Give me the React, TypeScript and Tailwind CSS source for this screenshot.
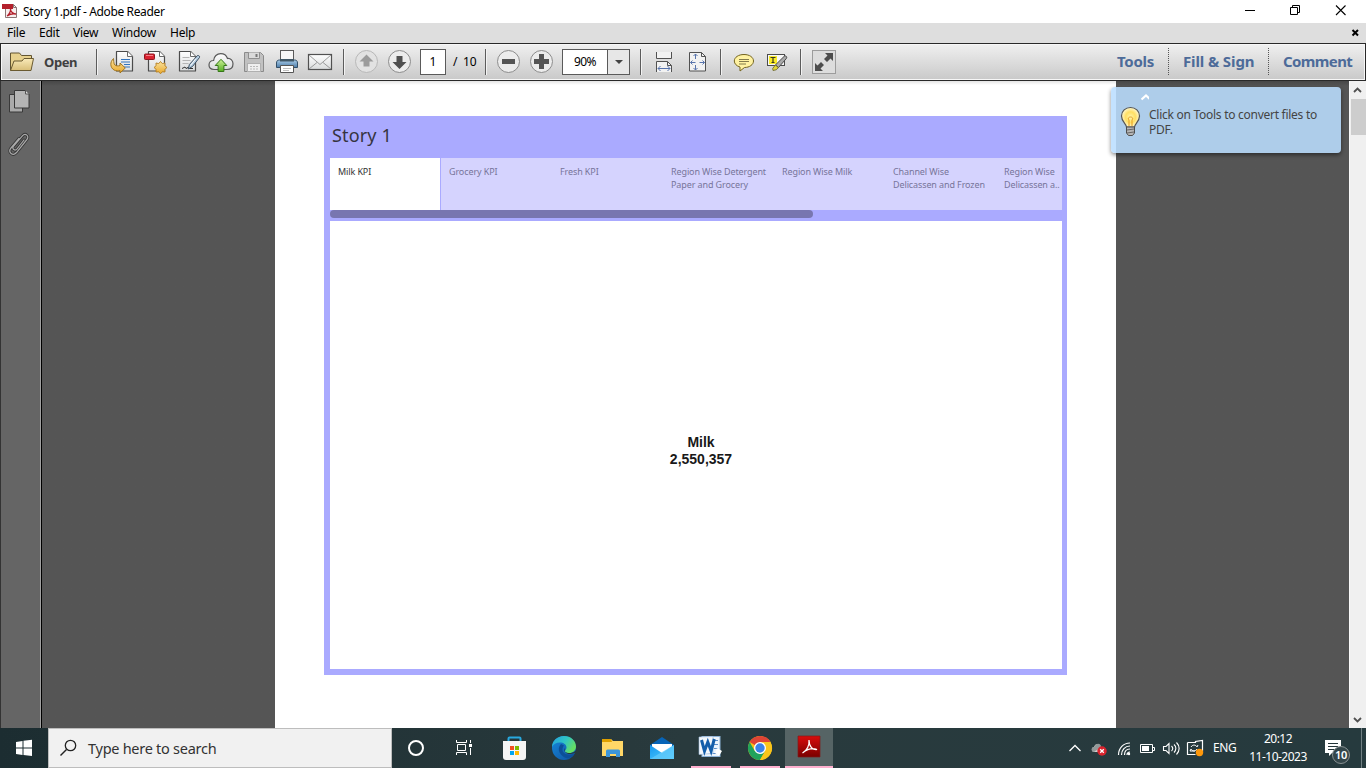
import React from "react";

type ArtProps = { x: number; y: number; w: number; h: number; children: React.ReactNode };

/* Drawing whose inner coordinates are screen pixels */
function Art({ x, y, w, h, children }: ArtProps) {
  return (
    <svg className="block shrink-0" width={w} height={h} viewBox={`${x} ${y} ${w} ${h}`} fill="none">
      {children}
    </svg>
  );
}

function TitleBar() {
  return (
    <header className="flex h-[23px] shrink-0 items-center bg-white">
      <Art x={0} y={0} w={23} h={23}>
        <path d="M5.5 4.5h8l3 3v10h-11z" fill="#f6eeee" stroke="#8b7575" />
        <path d="M13.5 4.5v3h3" stroke="#8b7575" />
        <rect x="2" y="4" width="11" height="5" fill="#b3202c" />
        <path d="M7 16c2-1 4-5 3.5-7 0 3 3 5 5.500 5-3-.7-6 0-9 2z" stroke="#b3202c" strokeWidth="1.300" />
      </Art>
      <span className="flex-1 pt-px whitespace-nowrap text-[12px] tracking-[-0.370px] text-black">Story 1.pdf - Adobe Reader</span>
      <Art x={1226} y={0} w={140} h={23}>
        <path d="M1245 10.500h10" stroke="#000" />
        <path d="M1290.500 7.500h7v7h-7zM1292.500 7V5.500h7v7h-1.500" stroke="#000" />
        <path d="M1336 5.500l9.500 9.500M1345.500 5.500l-9.500 9.500" stroke="#000" strokeWidth="1.100" />
      </Art>
    </header>
  );
}

function MenuBar() {
  return (
    <nav className="flex h-[20px] shrink-0 items-center bg-[#dedede] pl-[7px] text-[12px] tracking-[-0.250px] text-black">
      <span className="w-[32px]">File</span>
      <span className="w-[34px]">Edit</span>
      <span className="w-[39px]">View</span>
      <span className="w-[58px]">Window</span>
      <span className="flex-1">Help</span>
      <Art x={1346} y={23} w={20} h={20}>
        <path d="M1352.500 30l5.500 5.500M1358 30l-5.500 5.500" stroke="#000" strokeWidth="2" />
      </Art>
    </nav>
  );
}

function Separator() {
  return <div className="h-[26px] w-[2px] shrink-0 border-l border-[#5c5c5c] bg-[#f3f3f3]" />;
}

function Page({ x }: { x: number }) {
  return (
    <>
      <path d={`M${x} 51.500h11l5 5v14.500h-16z`} fill="url(#paper)" stroke="#4b4b4b" strokeWidth="1.200" strokeLinejoin="round" />
      <path d={`M${x + 11} 51.500v5h5`} fill="#fff" stroke="#6a6a6a" />
    </>
  );
}

function ToolbarIconsLeft() {
  return (
    <Art x={98} y={46} w={245} h={32}>
      <defs>
        <linearGradient id="paper" x1="0" y1="0" x2="0" y2="1">
          <stop stopColor="#fff" /><stop offset="1" stopColor="#d9dbdc" />
        </linearGradient>
        <linearGradient id="gold" x1="0" y1="0" x2="0" y2="1">
          <stop stopColor="#fae3a0" /><stop offset="1" stopColor="#e9a728" />
        </linearGradient>
        <linearGradient id="leaf" x1="0" y1="0" x2="0" y2="1">
          <stop stopColor="#d0f39a" /><stop offset="1" stopColor="#55ae22" />
        </linearGradient>
        <linearGradient id="printer" x1="0" y1="0" x2="0" y2="1">
          <stop stopColor="#a9cdea" /><stop offset="1" stopColor="#4d7ca8" />
        </linearGradient>
      </defs>
      <Page x={116.5} />
      <path d="M121 59.500h9M121 62h9M124 64.500h6M124 67h6" stroke="#3475be" strokeWidth="1.200" />
      <path d="M113.500 58.500c-3.800 3.500-3.500 9 .500 11.500 2 1.100 4.500 1 6 .600v2.400l5.300-5-5.300-5v2.600c-2.500.800-5 .200-5.800-1.600-.600-1.400-.400-3.500-.700-5.500z" fill="url(#gold)" stroke="#9a6d17" strokeWidth=".900" />

      <Page x={148.5} />
      <rect x="144.500" y="54" width="10" height="5.500" rx=".8" fill="#db2230" stroke="#8e1720" />
      <path d="M146 55.500h7" stroke="#f68088" />
      <path d="M160.500 61.500l1.800 2.100 2.700-.6-.1 2.700 2.100 1.800-2.100 1.800.1 2.700-2.700-.2-1.800 2-1.800-2-2.700.2.100-2.700-2.100-1.800 2.100-1.800-.1-2.700 2.700.6z" fill="url(#gold)" stroke="#b47e21" strokeWidth=".9" />

      <Page x={179.500} />
      <path d="M182.500 57.500h7M182.500 60.500h8M182.500 63.500h6" stroke="#b5b5b5" />
      <path d="M182 68.500l3-1.500 1 1.500 2-1 1 1h4" stroke="#333" />
      <path d="M197.500 55.500c1.500-.3 2.500 1 2 2l-7 9-4.300 2.500 1.200-4.500z" fill="#b4cce0" stroke="#3e5061" />
      <path d="M196 58.500l-5.500 7" stroke="#fff" />

      <path d="M214 69.500c-3 0-5-1.700-5-4.400s2-4.600 4.600-4.600c.3-4 3.400-6.900 7.100-6.900 3.200 0 5.800 1.900 6.800 4.900 3.300-.3 5.500 2.300 5.500 5.200 0 3.300-2.200 5.800-6 5.800z" fill="url(#paper)" stroke="#595959" strokeWidth="1.200" />
      <path d="M221 59.300l5.800 6.200h-2.900v6h-5.800v-6h-2.900z" fill="url(#leaf)" stroke="#357718" />

      <path d="M244.500 52.500h16l3 3v16h-19z" fill="#c1c1c1" stroke="#8b8b8b" />
      <path d="M248.500 52.500v6h11v-6" fill="#dadada" stroke="#8f8f8f" />
      <path d="M256.500 54v3" stroke="#777" strokeWidth="2" />
      <rect x="247.500" y="63.500" width="13" height="8" fill="#efefef" stroke="#b0b0b0" />
      <path d="M250 66.500h8M250 69h8" stroke="#b9b9b9" strokeDasharray="2 1" />

      <rect x="280.500" y="50.500" width="13" height="10" fill="#f7f7f7" stroke="#5a5a5a" />
      <path d="M276.500 63c0-2 1-3 3-3h15c2 0 3 1 3 3v4.500h-21z" fill="url(#printer)" stroke="#334f68" />
      <rect x="280" y="59" width="14" height="2.500" fill="#405766" />
      <path d="M280.500 65.500h13v7h-13z" fill="#fff" stroke="#555" />
      <path d="M283 68.500h8M283 70.500h6" stroke="#c0c0c0" />

      <rect x="308.500" y="54.500" width="23" height="15" fill="url(#paper)" stroke="#515151" strokeWidth="1.200" />
      <path d="M309 55l11 9.500 11-9.500M309 69l8-6.500M331 69l-8-6.500" stroke="#868686" strokeWidth=".8" />
    </Art>
  );
}

function RoundButton({ x, children, dim }: { x: number; children: React.ReactNode; dim?: boolean }) {
  return (
    <>
      <circle cx={x} cy="61.500" r="11" fill={dim ? "#e2e2e2" : "#ececec"} stroke={dim ? "#b8b8b8" : "#8c8c8c"} />
      {children}
    </>
  );
}

function Toolbar() {
  return (
    <div className="flex h-[38px] shrink-0 items-center border border-[#292929] bg-linear-to-b from-[#f0f0f0] to-[#c9c9c9] shadow-[inset_0_0_0_1px_#f7f7f7]">
      <Art x={1} y={46} w={43} h={32}>
        <defs>
          <linearGradient id="folder" x1="0" y1="0" x2="0" y2="1">
            <stop stopColor="#f9eab9" /><stop offset="1" stopColor="#d8be78" />
          </linearGradient>
        </defs>
        <path d="M10.500 70.500v-17.500h9l2 2.500h10v4" fill="#e7d18e" stroke="#625531" />
        <path d="M10.500 70.500l3.500-9.500h8l2-2.500h9.500l-2.500 12z" fill="url(#folder)" stroke="#6a5a31" strokeLinejoin="round" />
      </Art>
      <span className="w-[52px] shrink-0 text-[13px] font-bold tracking-[-0.400px] text-[#404040]">Open</span>
      <Separator />
      <ToolbarIconsLeft />
      <div className="flex shrink-0 items-center">
        <Separator />
        <Art x={345} y={46} w={75} h={32}>
          <RoundButton x={366.500} dim>
            <path d="M366.500 54.500l7 7h-4v5h-6v-5h-4z" fill="#9b9b9b" />
          </RoundButton>
          <RoundButton x={399.500}>
            <path d="M399.500 69l-7-7h4v-6h6v6h4z" fill="#505050" />
          </RoundButton>
        </Art>
        <div className="flex h-[26px] w-[26px] items-center justify-center border border-[#5a5a5a] bg-white text-[12px] text-black">1</div>
        <span className="w-[39px] pl-[7px] text-[12px] tracking-[-0.200px] whitespace-pre text-black">/  10</span>
        <Separator />
        <Art x={487} y={46} w={75} h={32}>
          <RoundButton x={508.500}><rect x="502" y="59" width="13" height="5" fill="#555" /></RoundButton>
          <RoundButton x={541.500}><path d="M534 59h5v-5h5v5h5v5h-5v5h-5v-5h-5z" fill="#555" /></RoundButton>
        </Art>
        <div className="flex h-[26px] w-[68px] border border-[#5a5a5a] bg-white">
          <span className="flex w-[44px] items-center justify-center text-[12px] tracking-[-0.500px] text-black">90%</span>
          <span className="flex flex-1 items-center justify-center border-l border-[#5a5a5a] bg-[#e7e7e7]">
            <Art x={0} y={0} w={8} h={4}><path d="M0 0h8L4 4z" fill="#444" /></Art>
          </span>
        </div>
        <div className="w-[10px]" />
        <Separator />
        <Art x={642} y={46} w={78} h={32}>
          <path d="M656.500 52v6.500h15V52" fill="#f2f2f2" stroke="#515151" />
          <path d="M656.500 72V61.500h11l4 4V72" fill="#f2f2f2" stroke="#515151" />
          <path d="M667.500 61.500v4h4" stroke="#515151" />
          <path d="M658 68.500h12M660.500 66l-2.500 2.500 2.500 2.500M667.500 66l2.500 2.500-2.500 2.500" stroke="#5874ac" />
          <path d="M689.500 52.500h12l4 4v14.500h-16z" fill="#f2f2f2" stroke="#515151" />
          <path d="M701.500 52.500v4h4" stroke="#515151" />
          <path d="M695.500 54v5M695.500 65v5M690.500 62.500h5M699.500 62.500h5M693.500 56l2-2 2 2M693.500 68l2 2 2-2M692.500 60.500l-2 2 2 2M702.500 60.500l2 2-2 2" stroke="#5874ac" />
        </Art>
        <Separator />
        <Art x={722} y={46} w={78} h={32}>
          <path d="M744 54.500c5.500 0 9.500 2.800 9.500 6.500s-4 6.500-9 6.500l-4.500 3.500v-4c-3.500-1-5.700-3.300-5.700-6 0-3.700 4.200-6.500 9.700-6.500z" fill="#fff2a2" stroke="#74641f" />
          <path d="M739 59.500h10M739 61.500h10M739 64h7" stroke="#756d42" strokeWidth=".9" />
          <rect x="767.500" y="54.500" width="17" height="11" fill="#f8f8f8" stroke="#4c4c4c" />
          <rect x="769" y="56" width="8" height="8" fill="#f9ec29" />
          <path d="M770.500 57.500h5M773 57.500v5.500M771.500 62.500h3" stroke="#393621" strokeWidth="1.200" />
          <path d="M784.500 56c1.700-.4 2.700.9 2 2.300l-8 9.200-3-2.600z" fill="#aaa" stroke="#4b4b4b" />
          <path d="M775.300 65l3 2.600-2 2.200-3.300.7-.3-2z" fill="#e1d73a" stroke="#666126" strokeWidth=".8" />
        </Art>
        <Separator />
        <Art x={802} y={46} w={40} h={32}>
          <rect x="812.500" y="50.500" width="23" height="23" fill="#ddd" stroke="#9c9c9c" />
          <path d="M825 53h8v8l-2.500-2.500-3.500 3.500-3-3 3.500-3.500zM823 71h-8v-8l2.500 2.500 3.500-3.500 3 3-3.500 3.500z" fill="#4d4d4d" />
        </Art>
      </div>
      <div className="flex flex-1 justify-end pb-px text-[15px] font-bold text-[#4d6b99]">
        <span className="flex h-[27px] w-[51px] items-center tracking-[-0.250px]">Tools</span>
        <span className="flex h-[27px] w-[100px] items-center border-l border-dotted border-[#555] pl-[14px] tracking-[-0.120px]">Fill &amp; Sign</span>
        <span className="flex h-[27px] w-[97px] items-center border-l border-dotted border-[#555] pl-[14px] tracking-[-0.600px]">Comment</span>
      </div>
    </div>
  );
}

const tabs: string[][] = [
  ["Milk KPI"],
  ["Grocery KPI"],
  ["Fresh KPI"],
  ["Region Wise Detergent", "Paper and Grocery"],
  ["Region Wise Milk"],
  ["Channel Wise", "Delicassen and Frozen"],
  ["Region Wise", "Delicassen a.."],
];

function Story() {
  return (
    <section className="flex h-[559px] w-[743px] flex-col bg-[#aaaaff] pr-[5px] pl-[6px]">
      <h1 className="h-[42px] pl-[2px] text-[18px] leading-[39px] tracking-[0.150px] text-[#36343f]">Story 1</h1>
      <div className="flex h-[52px] overflow-hidden bg-[#d5d3fe]">
        {tabs.map((lines, i) => (
          <div
            key={lines.join()}
            className={
              i === 0
                ? "w-[111px] shrink-0 border-r border-[#aaaaff] bg-white pt-[7px] pl-[8px] text-[9px] leading-[13px] tracking-[-0.110px] text-[#333]"
                : "w-[111px] shrink-0 pt-[7px] pl-[8px] text-[9px] leading-[13px] tracking-[-0.110px] text-[#77759a]"
            }
          >
            {lines.map((line) => <div key={line} className="whitespace-nowrap">{line}</div>)}
          </div>
        ))}
      </div>
      <div className="mb-[3px] h-[8px] w-[483px] rounded-full bg-[#7876b0]" />
      <div className="flex h-[448px] flex-col items-center bg-white pt-[213px] pl-[10px] font-['Liberation_Sans',Arial,sans-serif] text-[14px] leading-[17px] font-bold text-[#191919]">
        <div>Milk</div>
        <div>2,550,357</div>
      </div>
    </section>
  );
}

function Tip() {
  return (
    <aside className="absolute top-[6px] left-[1111px] flex h-[66px] w-[230px] rounded-[4px] bg-[#bbdeff]/88 shadow-[0_2px_4px_#0007]">
      <Art x={1111} y={87} w={38} h={66}>
        <path d="M1141.500 99.500l4.500-4 4.500 4" stroke="#fff" strokeWidth="2.200" />
        <defs>
          <radialGradient id="glow"><stop stopColor="#fff6ad" /><stop offset=".55" stopColor="#ffdf63" /><stop offset="1" stopColor="#fff8cf" /></radialGradient>
        </defs>
        <path d="M1126.500 127c0-3-5-5-5-11 0-5 4-8.500 9-8.500s9 3.500 9 8.500c0 6-5 8-5 11z" fill="url(#glow)" stroke="#545454" strokeWidth="1.200" />
        <path d="M1129 126v-6c-3-4 6-4 3 0v6" stroke="#e39b20" />
        <path d="M1126.500 127h8v6l-2 2.500h-4l-2-2.500z" fill="#b5b5b5" stroke="#4e4e4e" />
        <path d="M1127 130l7-1M1127 133l7-1" stroke="#666" />
      </Art>
      <p className="pt-[20px] text-[12px] leading-[15px] tracking-[-0.270px] whitespace-nowrap text-[#444]">Click on Tools to convert files to<br />PDF.</p>
    </aside>
  );
}

function Workspace() {
  return (
    <main className="relative flex h-[647px] shrink-0 bg-[#555]">
      <aside className="w-[42px] shrink-0 border-r border-l border-r-black border-l-[#333] bg-[#656565] shadow-[inset_-1px_0_0_#a0a0a0]">
        <Art x={1} y={81} w={38} h={80}>
          <path d="M9.500 94.500h13v17.500h-13z" fill="#aaa" stroke="#393939" />
          <path d="M14.500 90.500h11l3.500 3.500v14h-14.500z" fill="#b5b5b5" stroke="#393939" />
          <path d="M25.500 90.500v3.500h3.500" fill="#ddd" stroke="#555" />
          <path d="M24 140l-7 9c-2 2.500-5.500-.2-3.600-2.600l9-10.500c3-3.400 7.300.2 4.500 3.600L16.500 152.500c-3.600 4.200-9-.2-5.500-4.500l8-9.500" stroke="#363636" strokeWidth="3" strokeLinecap="round" />
          <path d="M24 140l-7 9c-2 2.500-5.500-.2-3.600-2.600l9-10.500c3-3.400 7.300.2 4.500 3.600L16.500 152.500c-3.600 4.200-9-.2-5.500-4.500l8-9.500" stroke="#aaa" strokeWidth="1.200" strokeLinecap="round" />
        </Art>
      </aside>
      <div className="flex flex-1 justify-start bg-linear-to-b from-[#474747] via-[#555] via-[5px] to-[#555] pl-[233px]">
        <div className="w-[841px] bg-linear-to-b from-[#e4e4e4] via-white via-[4px] to-white pt-[35px] pl-[49px]"><Story /></div>
      </div>
      <div className="flex w-[17px] shrink-0 flex-col items-center border-l border-[#fafafa] bg-[#f0f0f0]">
        <Art x={1350} y={81} w={16} h={18}><path d="M1354 92l3.500-3.500 3.500 3.500" stroke="#505050" strokeWidth="1.800" /></Art>
        <div className="h-[36px] w-[15px] bg-[#cdcdcd]" />
        <div className="flex-1" />
        <Art x={1350} y={710} w={16} h={18}><path d="M1354 718l3.500 3.500 3.500-3.500" stroke="#505050" strokeWidth="1.800" /></Art>
      </div>
      <Tip />
    </main>
  );
}

function TaskIcons() {
  return (
    <Art x={392} y={728} w={441} h={40}>
      <defs>
        <linearGradient id="edgeTop" x1="0" y1="0" x2="1" y2=".5"><stop stopColor="#239fe0" /><stop offset=".55" stopColor="#30c5c5" /><stop offset="1" stopColor="#65df63" /></linearGradient>
        <linearGradient id="edgeBody" x1="0" y1="0" x2="1" y2="1"><stop stopColor="#1689dc" /><stop offset="1" stopColor="#10519e" /></linearGradient>
        <linearGradient id="mail" x1="0" y1="0" x2="1" y2="1"><stop stopColor="#1695ee" /><stop offset="1" stopColor="#50d0ff" /></linearGradient>
        <linearGradient id="reader" x1="0" y1="0" x2="0" y2="1"><stop stopColor="#d90c0c" /><stop offset="1" stopColor="#790000" /></linearGradient>
      </defs>
      <circle cx="416" cy="748" r="7" stroke="#fff" strokeWidth="2" />
      <path d="M456.500 740v2.500h10V740M456.500 755v-2.500h10v2.500M457.500 744.500h8v6h-8zM470.500 740v3M470.500 748v7" stroke="#fff" />
      <rect x="469" y="744" width="3" height="3" fill="#fff" />
      <path d="M508.500 742v-3.500q0-1 1-1h10q1 0 1 1v3.500" stroke="#28a9df" strokeWidth="2" />
      <path d="M503 741h23v16q0 3-3 3h-17q-3 0-3-3z" fill="#f5f5f5" />
      <path d="M510 746h4v4h-4z" fill="#f25022" /><path d="M515 746h4v4h-4z" fill="#7fba00" /><path d="M510 751h4v4h-4z" fill="#00a4ef" /><path d="M515 751h4v4h-4z" fill="#ffb900" />
      <circle cx="564" cy="748" r="12" fill="url(#edgeBody)" />
      <path d="M552 747c0-6 5-11 12-11 7 0 12 5 12 10.500 0 4-3 6.500-7 6.500-2.500 0-4-.8-4-1.800 0-1 1.500-1.700 1.500-3.700 0-3-3-5-6.500-5-4 0-7 2-8 4.500z" fill="url(#edgeTop)" />
      <path d="M561 744c-5 5-1 13 7 14.500 3-.8 5-2.500 6.500-5-6 2.800-12 .5-12-4 0-1.700.8-3 1.500-4-.8-.7-1.800-1-3-1.500z" fill="#0c4f98" />
      <path d="M564.500 748c-1.500 4 3.500 8 10 5l1.500-.5v-2c-2 2-5 2.700-7.500 2.500-2.500-.2-3.800-1-3.500-2z" fill="#26383c" />
      <path d="M602 739h9l2 2h10v15h-21z" fill="#ffd767" />
      <path d="M602 739h9l1 3h-10z" fill="#e0a000" />
      <path d="M606 757v-6q0-1.500 1.500-1.500h11q1.500 0 1.500 1.500v6h-4v-3h-6v3z" fill="#3c96da" />
      <path d="M650 745l12-8 12 8v14h-24z" fill="#0764b7" />
      <path d="M652 744h20v10h-20z" fill="#fff" />
      <path d="M650 745l12 8 12-8v14h-24z" fill="url(#mail)" />
      <path d="M650 759l24-14v14z" fill="#65cafb" opacity=".7" />
      <rect x="702" y="736.500" width="18" height="20" fill="#edf5fc" stroke="#8eb3d7" />
      <path d="M714 740.500h4M714 744.500h4M714 748.500h4M706 753.500h12" stroke="#5d8fca" />
      <path d="M699 737l14-.5v17l-14 1z" fill="#f3f7fb" stroke="#9cb9da" strokeWidth=".6" />
      <path d="M701.500 740l3 11 3.300-9 3.300 9 3.200-12" stroke="#145eaa" strokeWidth="3" />
      <path d="M717 748l5 3-3 5-4-3z" fill="#fff" />
      <circle cx="760" cy="748" r="12" fill="#fbbf16" />
      <path d="M760 748L749.600 742A12 12 0 0 1 770.400 742L760 742z" fill="#df4435" />
      <path d="M749.600 742A12 12 0 0 0 760 760L765.200 751L760 748L754.800 751z" fill="#20a35b" />
      <path d="M760 748v-6h10.400A12 12 0 0 1 760 760l5.200-9z" fill="#fbc51b" />
      <circle cx="760" cy="748" r="6" fill="#fff" /><circle cx="760" cy="748" r="4.700" fill="#3b82e8" />
      <path d="M785 728h48v38h-48z" fill="#566465" />
      <path d="M798 736h22v21h-22z" fill="url(#reader)" stroke="#7e1b1b" strokeWidth=".7" />
      <path d="M802.500 753c4-2.500 7-7 6.500-13 0 7 4 10 8 9.500-5-2-10 0-14.500 3.500z" stroke="#fff" strokeWidth="1.200" />
      <path d="M691 766h40v2h-40zM740 766h40v2h-40zM785 766h48v2h-48z" fill="#ffb0cf" />
    </Art>
  );
}

function Taskbar() {
  return (
    <footer className="flex h-[40px] shrink-0 bg-linear-to-r from-[#1c2d31] via-[#293a3d] to-[#263a3e] text-white">
      <Art x={0} y={728} w={48} h={40}>
        <path d="M16 742l6.500-1v6.500H16zM23.500 740.800l8.500-1v7.700h-8.500zM16 748.500h6.500v6.500l-6.500-1zM23.500 748.500h8.500v7.500l-8.500-1z" fill="#fff" />
      </Art>
      <div className="flex w-[344px] shrink-0 items-center border border-[#bdbdbd] bg-[#f1f1f1]">
        <Art x={49} y={729} w={39} h={38}>
          <circle cx="70.500" cy="745.500" r="5.200" stroke="#222" strokeWidth="1.300" /><path d="M66.500 749.500l-6 6" stroke="#222" strokeWidth="1.400" />
        </Art>
        <span className="text-[14.500px] tracking-[-0.270px] text-[#333]">Type here to search</span>
      </div>
      <TaskIcons />
      <div className="flex flex-1 justify-end">
        <Art x={1062} y={728} w={150} h={40}>
          <path d="M1069.500 751l5.500-5.500 5.500 5.500" stroke="#fff" strokeWidth="1.300" />
          <path d="M1094 752c-3 0-3-5 0-5 1-4 6-4 7 0 4-1 5 5 1 5z" fill="#d0d0d0" />
          <path d="M1095 746c1-3 6-3 6 1l-7 5c-3 0-3-5 0-5z" fill="#929999" />
          <circle cx="1102" cy="751" r="4.700" fill="#d9232d" /><path d="M1100.200 749.200l3.600 3.600M1103.800 749.200l-3.600 3.600" stroke="#fff" strokeWidth="1.300" />
          <path d="M1118.500 755c0-7 5-12 11.500-12M1121.500 755c0-5 3.500-9 8.500-9M1124.500 755c0-3.500 2-6 5.500-6M1127 755c0-2 1-3 3-3" stroke="#fff" strokeWidth="1.200" />
          <circle cx="1129" cy="754" r="1.200" fill="#fff" />
          <path d="M1140.500 744.500h12v8h-12zM1153 747.500h1.500v3h-1.500" stroke="#fff" /><path d="M1142 746h7v5h-7z" fill="#fff" />
          <path d="M1163.500 746.500h2.500l3-3v10l-3-3h-2.500zM1171.500 746c1.500 1.500 1.500 3.500 0 5M1174 744.500c2.500 2 2.500 5.500 0 8M1176.500 742.500c3.500 3.500 3.500 8.500 0 12" stroke="#fff" strokeWidth="1.100" />
          <path d="M1187.500 742.500h8v-1l7-1v11M1187.500 742.500v12h8" stroke="#fff" strokeWidth="1.200" />
          <path d="M1191 747c2-3 5-2 6 0l1-2M1197 749c-2 3-5 2-6 0l-1 2h5" stroke="#fff" />
          <circle cx="1199.500" cy="752.500" r="3.700" fill="#ff980b" />
        </Art>
        <span className="flex w-[33px] items-center pl-[1px] text-[12px] tracking-[-0.400px]">ENG</span>
        <div className="mr-[4px] flex w-[66px] flex-col items-center pt-[2px] text-[12px] leading-[18px] tracking-[-0.500px] whitespace-nowrap">
          <span>20:12</span><span>11-10-2023</span>
        </div>
        <div className="relative w-[51px]">
          <Art x={1315} y={728} w={51} h={40}>
            <path d="M1325 740h16v13h-9l-3 3v-3h-4z" fill="#fff" />
            <path d="M1328 743.500h10M1328 746.500h10M1328 749.500h7" stroke="#25363a" />
            <circle cx="1341" cy="755" r="8.500" fill="#34464a" stroke="#899193" />
            <path d="M1361.500 728v40" stroke="#718083" />
          </Art>
          <span className="absolute top-[20px] left-[16px] w-[20px] text-center text-[11px] leading-[14px] font-semibold tracking-[-0.300px]">10</span>
        </div>
      </div>
    </footer>
  );
}

export default function App() {
  return (
    <div className="flex h-[768px] w-[1366px] flex-col overflow-hidden bg-white font-['Noto_Sans','Open_Sans',sans-serif] leading-none">
      <TitleBar />
      <MenuBar />
      <Toolbar />
      <Workspace />
      <Taskbar />
    </div>
  );
}
